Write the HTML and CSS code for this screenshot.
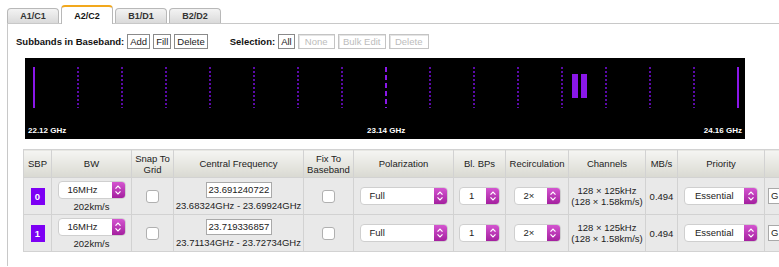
FILE: index.html
```html
<!DOCTYPE html>
<html lang="en">
  <head>
    <meta charset="UTF-8" />
    <title>Baseband Subbands</title>
    <link rel="stylesheet" href="styles.css">
  </head>
  <body>
    <div class="tabs">
      <div class="tab">A1/C1</div>
      <div class="tab active">A2/C2</div>
      <div class="tab">B1/D1</div>
      <div class="tab">B2/D2</div>
    </div>

    <div class="panel">
      <div class="toolbar">
        <span class="label">Subbands in Baseband:</span>
        <button class="btn">Add</button>
        <button class="btn">Fill</button>
        <button class="btn">Delete</button>
        <span class="label sel-label">Selection:</span>
        <button class="btn">All</button>
        <button class="btn off wide-none" disabled>None</button>
        <button class="btn off wide-bulk" disabled>Bulk Edit</button>
        <button class="btn off wide-del" disabled>Delete</button>
      </div>

      <div class="spectrum">
        <div class="line solid" style="left: 8px"></div>
        <div class="line dotted" style="left: 52px"></div>
        <div class="line dotted" style="left: 96px"></div>
        <div class="line dotted" style="left: 140px"></div>
        <div class="line dotted" style="left: 184px"></div>
        <div class="line dotted" style="left: 228px"></div>
        <div class="line dotted" style="left: 272px"></div>
        <div class="line dotted" style="left: 316px"></div>
        <div class="line dashed" style="left: 360px"></div>
        <div class="line dotted" style="left: 404px"></div>
        <div class="line dotted" style="left: 448px"></div>
        <div class="line dotted" style="left: 492px"></div>
        <div class="line dotted" style="left: 536px"></div>
        <div class="band" style="left: 547px"></div>
        <div class="band" style="left: 556px"></div>
        <div class="line dotted" style="left: 580px"></div>
        <div class="line dotted" style="left: 624px"></div>
        <div class="line dotted" style="left: 668px"></div>
        <div class="line solid" style="left: 712px"></div>

        <span class="freq freq-left">22.12 GHz</span>
        <span class="freq freq-mid">23.14 GHz</span>
        <span class="freq freq-right">24.16 GHz</span>
      </div>

      <table class="sb-table">
        <colgroup>
          <col style="width: 28px"><col style="width: 80px"><col style="width: 42px">
          <col style="width: 130px"><col style="width: 50px"><col style="width: 100px">
          <col style="width: 52px"><col style="width: 63px"><col style="width: 77px">
          <col style="width: 32px"><col style="width: 87px"><col style="width: 15px">
        </colgroup>
        <thead>
          <tr>
            <th>SBP</th>
            <th>BW</th>
            <th>Snap To<br>Grid</th>
            <th>Central Frequency</th>
            <th>Fix To<br>Baseband</th>
            <th>Polarization</th>
            <th>Bl. BPs</th>
            <th>Recirculation</th>
            <th>Channels</th>
            <th>MB/s</th>
            <th>Priority</th>
            <th class="last"></th>
          </tr>
        </thead>
        <tbody id="subbandList"></tbody>
      </table>
    </div>

    <script>
      // subbands in this baseband
      const subbands = [
        { id: 0, cf: "23.691240722", low: "23.68324GHz", high: "23.69924GHz" },
        { id: 1, cf: "23.719336857", low: "23.71134GHz", high: "23.72734GHz" },
      ];

      const arrow = `<span class="arrow"><svg width="8" height="12" viewBox="0 0 8 12">
        <path d="M1.5 4.6 L4 2.1 L6.5 4.6 M1.5 7.4 L4 9.9 L6.5 7.4" fill="none" stroke="#fff" stroke-width="1.3"/>
      </svg></span>`;

      function select(text, cls) {
        return `<div class="sel ${cls}"><span class="sel-text">${text}</span>${arrow}</div>`;
      }

      function loadSubbands() {
        const list = document.getElementById("subbandList");
        list.innerHTML = "";

        subbands.forEach((sb) => {
          const row = document.createElement("tr");
          row.innerHTML = `
            <td><span class="sbp-id">${sb.id}</span></td>
            <td>${select("16MHz", "sel-bw")}<div class="sub">202km/s</div></td>
            <td><span class="check"></span></td>
            <td><div class="cf-input">${sb.cf}</div><div class="sub">${sb.low} - ${sb.high}</div></td>
            <td><span class="check"></span></td>
            <td>${select("Full", "sel-pol")}</td>
            <td>${select("1", "sel-bps")}</td>
            <td>${select("2×", "sel-rec")}</td>
            <td>128 × 125kHz<br>(128 × 1.58km/s)</td>
            <td>0.494</td>
            <td>${select("Essential", "sel-pri")}</td>
            <td class="last"><div class="next-input">G</div></td>
          `;
          list.appendChild(row);
        });
      }

      loadSubbands();
    </script>
  </body>
</html>
```

FILE: styles.css
```css
body {
  font-family: "Liberation Sans", Arial, sans-serif;
  margin: 0;
  padding: 0;
  color: #222;
  background-color: #fff;
  width: 779px;
  height: 267px;
  overflow: hidden;
}

.tabs {
  display: flex;
  align-items: flex-end;
  gap: 2px;
  height: 18px;
  padding: 5px 0 0 7px;
}

.tab {
  width: 50px;
  height: 14px;
  line-height: 14px;
  border: 1px solid #b8b8b8;
  border-bottom: none;
  border-radius: 4px 4px 0 0;
  background: linear-gradient(#f3f3f3, #dadada);
  font-size: 9px;
  font-weight: bold;
  text-align: center;
  color: #333;
}

.tab.active {
  position: relative;
  z-index: 1;
  height: 17px;
  line-height: 19px;
  margin-bottom: -1px;
  border-top: 2px solid #f2a81d;
  background: #fff;
  color: #111;
}

.panel {
  margin-left: 7px;
  border-left: 1px solid #c8c8c8;
  border-top: 1px solid #c8c8c8;
  height: 242px;
}

.toolbar {
  display: flex;
  align-items: center;
  height: 16px;
  margin-top: 9px;
  padding-left: 8px;
  font-size: 9.5px;
}

.label {
  font-weight: bold;
  color: #111;
}

.sel-label {
  margin-left: 22px;
}

.btn {
  font-family: "Liberation Sans", Arial, sans-serif;
  font-size: 9.5px;
  height: 15px;
  padding: 0 2px;
  margin-left: 3px;
  border: 1px solid #8a8a8a;
  background-color: #fff;
  color: #222;
}

.btn.off {
  color: #bcbcbc;
  border: 1px solid #c4c4c4;
  box-shadow: inset 1px 1px 0 #e4e4e4;
}

.wide-none {
  width: 37px;
}

.wide-bulk {
  width: 48px;
}

.wide-del {
  width: 40px;
}

.spectrum {
  position: relative;
  width: 720px;
  height: 81px;
  margin: 9px 0 0 17px;
  background-color: #000;
}

.line {
  position: absolute;
  top: 9px;
  width: 2px;
  height: 41px;
}

.solid {
  background-color: #8a17e8;
}

.dotted {
  background: repeating-linear-gradient(#5b0aa8 0 2px, transparent 2px 4px);
}

.dashed {
  background: repeating-linear-gradient(#8a17e8 0 5px, transparent 5px 8px);
}

.band {
  position: absolute;
  top: 16px;
  width: 6px;
  height: 24px;
  background-color: #8a17e8;
}

.freq {
  position: absolute;
  top: 68px;
  font-size: 8px;
  font-weight: bold;
  color: #fff;
}

.freq-left {
  left: 3px;
}

.freq-mid {
  left: 342px;
}

.freq-right {
  right: 3px;
}

.sb-table {
  table-layout: fixed;
  border-collapse: collapse;
  width: 756px;
  margin: 10px 0 0 15px;
  font-size: 9.5px;
}

.sb-table th,
.sb-table td {
  border: 1px solid #d2d2d2;
  padding: 0;
  text-align: center;
  vertical-align: middle;
  white-space: nowrap;
  overflow: hidden;
}

.sb-table th {
  height: 27px;
  font-weight: normal;
  line-height: 11px;
  color: #222;
  background: linear-gradient(#f5f5f3, #e6e6e0 55%, #d9d9d2);
}

.sb-table td {
  height: 36px;
  line-height: 11px;
  background-color: #e9e9e9;
  color: #222;
}

.sb-table .last {
  border-right: none;
}

.sbp-id {
  display: inline-block;
  width: 14px;
  height: 17px;
  line-height: 17px;
  background-color: #7d00f4;
  color: #fff;
  font-weight: bold;
}

.sel {
  display: flex;
  height: 16px;
  margin: 0 auto;
  border: 1px solid #cfcfcf;
  border-radius: 4px;
  background-color: #fff;
  overflow: hidden;
}

.sel-text {
  flex: 1;
  text-align: left;
  padding-left: 9px;
  line-height: 16px;
}

.arrow {
  width: 13px;
  display: flex;
  align-items: center;
  justify-content: center;
  background: linear-gradient(#d455d0, #a4209f);
}

.sel-bw {
  width: 66px;
}

.sel-pol {
  width: 86px;
}

.sel-bps {
  width: 39px;
}

.sel-rec {
  width: 45px;
}

.sel-pri {
  width: 72px;
}

.sel-pri .sel-text {
  padding-left: 10px;
}

.sub {
  margin-top: 2px;
}

.cf-input {
  width: 60px;
  height: 14px;
  line-height: 14px;
  margin: 0 auto;
  padding: 0 2px;
  border: 1px solid #a9a9a9;
  background-color: #fff;
  text-align: left;
  overflow: hidden;
}

.check {
  display: inline-block;
  width: 11px;
  height: 11px;
  border: 1px solid #b0b0b0;
  border-radius: 3px;
  background-color: #fff;
  vertical-align: middle;
}

.next-input {
  width: 9px;
  height: 14px;
  line-height: 14px;
  margin-left: 3px;
  padding-left: 2px;
  border: 1px solid #a9a9a9;
  border-right: none;
  background-color: #fff;
  text-align: left;
}
```
